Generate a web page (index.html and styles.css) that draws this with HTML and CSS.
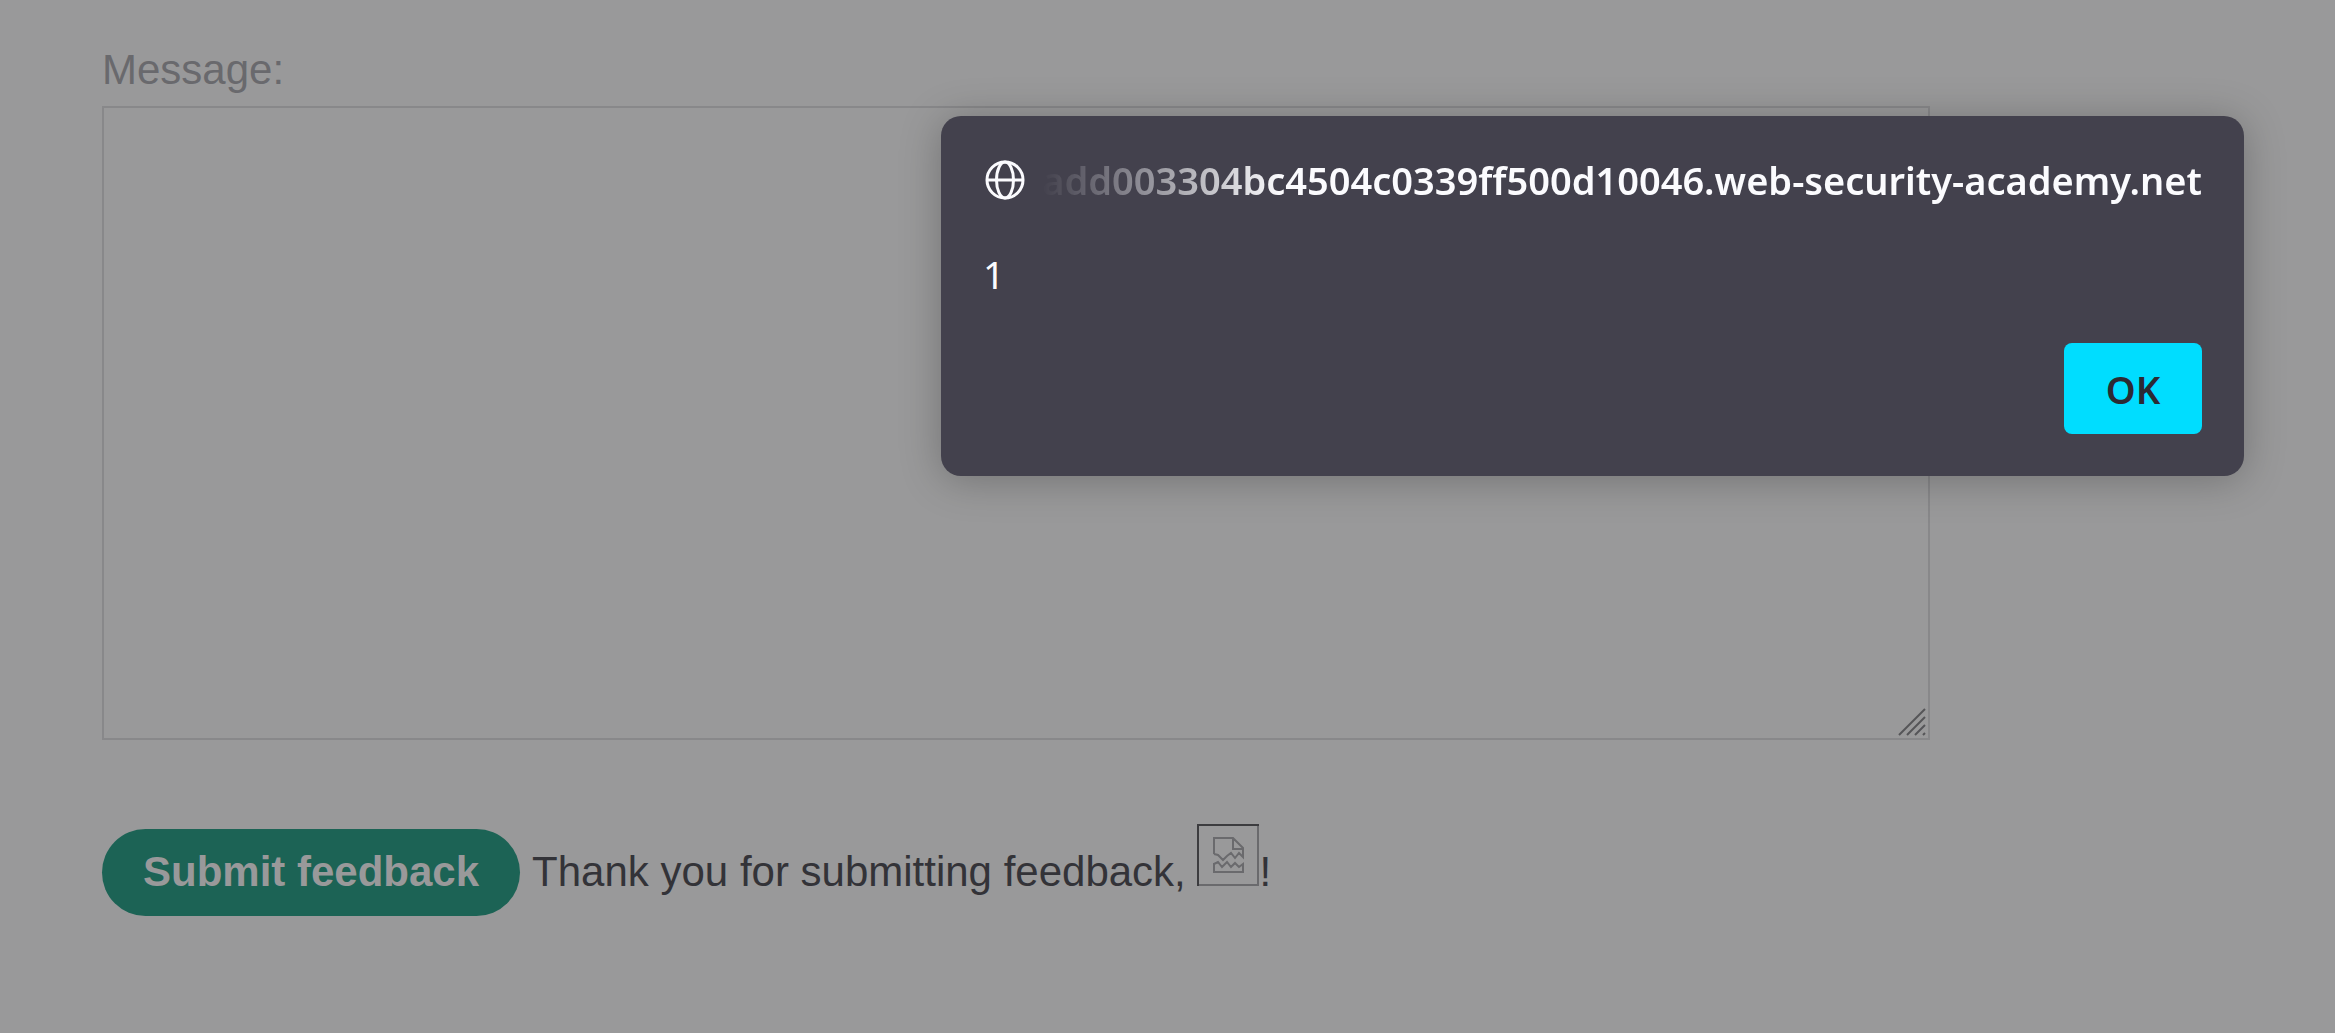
FILE: index.html
```html
<!DOCTYPE html>
<html lang="en">
<head>
<meta charset="utf-8">
<title>Submit feedback</title>
<link rel="stylesheet" href="styles.css">
</head>
<body>
<main class="page">
  <form class="feedback">
    <label class="field-label" for="message">Message:</label>
    <div class="field">
      <textarea class="message" id="message" name="message"></textarea>
      <svg class="grip" viewBox="0 0 28 28" aria-hidden="true">
        <path d="M1 27L27 1M9 27L27 9M17 27L27 17M25 27L27 25"/>
      </svg>
    </div>
    <div class="actions">
      <button class="submit" type="submit">Submit feedback</button>
      <p class="result">Thank you for submitting feedback, <svg class="broken" viewBox="0 0 62 62" role="img" aria-label="Missing image">
        <path class="edge-light" d="M61 0V61H0"/>
        <path class="edge-dark" d="M1 62V1H62"/>
        <path class="sheet" d="M17 30V14H36L46 24V33L42 29L38 34L34 29L30 32L26 36L21 31L17 30M36 14V25H46M17 39V48H46V40L42 43L38 39L34 43L30 38L25 43L21 38L17 40"/>
      </svg>!</p>
    </div>
  </form>
</main>
<section class="dialog" role="alertdialog" aria-labelledby="origin" aria-describedby="alert-text">
  <header class="dialog-head">
    <svg class="globe" viewBox="0 0 40 40" aria-hidden="true">
      <circle cx="20" cy="20" r="18"/>
      <ellipse cx="20" cy="20" rx="8.5" ry="18"/>
      <path d="M2 20H38"/>
    </svg>
    <h1 class="origin" id="origin">add003304bc4504c0339ff500d10046.web-security-academy.net</h1>
  </header>
  <p class="dialog-text" id="alert-text">1</p>
  <footer class="dialog-foot"><button class="ok" type="button">OK</button></footer>
</section>
</body>
</html>
```
FILE: styles.css
```css
* {
  box-sizing: border-box;
}

body {
  margin: 0;
  background: #99999a;
  color: #333338;
  font-family: "Liberation Sans", Arial, sans-serif;
  font-size: 42px;
  line-height: 48px;
}

.page {
  padding: 46px 405px 0 102px;
}

.field-label {
  display: block;
  margin-bottom: 12px;
  color: #69696d;
}

.field {
  position: relative;
}

.message {
  display: block;
  width: 100%;
  height: 634px;
  padding: 6px;
  border: 2px solid #88888a;
  background: transparent;
  font: inherit;
  resize: none;
}

.grip {
  position: absolute;
  right: 4px;
  bottom: 4px;
  width: 28px;
  height: 28px;
  fill: none;
  stroke: #555558;
  stroke-width: 2;
}

.actions {
  display: flex;
  align-items: baseline;
  gap: 12px;
  margin-top: 84px;
}

.submit {
  height: 87px;
  padding: 0 41px;
  border: 0;
  border-radius: 44px;
  background: #1c6355;
  color: #99999a;
  font: inherit;
  font-weight: 700;
  white-space: nowrap;
}

.result {
  margin: 0;
  white-space: nowrap;
}

.broken {
  width: 62px;
  height: 62px;
  vertical-align: baseline;
  fill: none;
  stroke-width: 2;
}

.edge-dark {
  stroke: #3c3c3f;
}

.edge-light,
.sheet {
  stroke: #6a6a6d;
}

.dialog {
  position: absolute;
  top: 116px;
  right: 91px;
  width: 1303px;
  padding: 42px;
  border-radius: 20px;
  background: #43414d;
  box-shadow: 0 4px 40px rgba(0, 0, 0, 0.25);
  color: #fbfbfe;
  font-family: "Noto Sans", sans-serif;
  font-size: 38px;
}

.dialog-head {
  display: flex;
  align-items: center;
  justify-content: space-between;
  height: 44px;
  padding-left: 2px;
}

.globe {
  flex: none;
  width: 40px;
  height: 40px;
  fill: none;
  stroke: #fbfbfe;
  stroke-width: 3;
}

.origin {
  flex: none;
  margin: 0;
  font-size: 38px;
  font-weight: 600;
  line-height: 56px;
  white-space: nowrap;
  mask-image: linear-gradient(to right, transparent, #000 240px);
}

.dialog-text {
  margin: 48px 0 45px;
}

.dialog-foot {
  display: flex;
  justify-content: flex-end;
}

.ok {
  width: 138px;
  height: 91px;
  border: 0;
  border-radius: 8px;
  background: #00ddff;
  color: #2b2a33;
  font: inherit;
  font-weight: 600;
}
```
